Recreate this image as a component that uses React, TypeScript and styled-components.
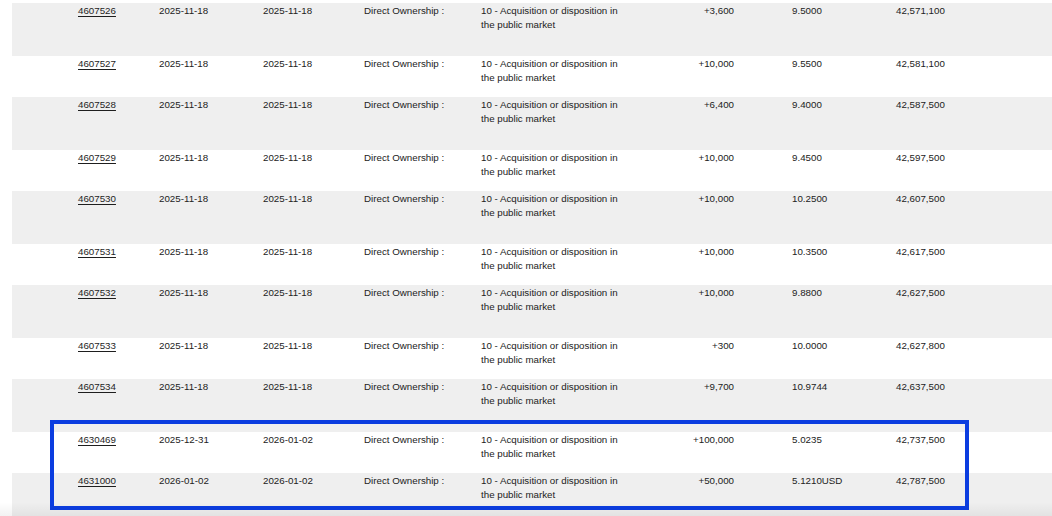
import React from "react";
import styled, { createGlobalStyle } from "styled-components";

interface Filing {
  id: string;
  tradeDate: string;
  filedDate: string;
  ownership: string;
  nature: string;
  change: string;
  price: string;
  balance: string;
}

const nature = "10 - Acquisition or disposition in the public market";

const rows: Filing[] = [
  ["4607526", "2025-11-18", "2025-11-18", "+3,600", "9.5000", "42,571,100"],
  ["4607527", "2025-11-18", "2025-11-18", "+10,000", "9.5500", "42,581,100"],
  ["4607528", "2025-11-18", "2025-11-18", "+6,400", "9.4000", "42,587,500"],
  ["4607529", "2025-11-18", "2025-11-18", "+10,000", "9.4500", "42,597,500"],
  ["4607530", "2025-11-18", "2025-11-18", "+10,000", "10.2500", "42,607,500"],
  ["4607531", "2025-11-18", "2025-11-18", "+10,000", "10.3500", "42,617,500"],
  ["4607532", "2025-11-18", "2025-11-18", "+10,000", "9.8800", "42,627,500"],
  ["4607533", "2025-11-18", "2025-11-18", "+300", "10.0000", "42,627,800"],
  ["4607534", "2025-11-18", "2025-11-18", "+9,700", "10.9744", "42,637,500"],
  ["4630469", "2025-12-31", "2026-01-02", "+100,000", "5.0235", "42,737,500"],
  ["4631000", "2026-01-02", "2026-01-02", "+50,000", "5.1210USD", "42,787,500"],
].map(([id, tradeDate, filedDate, change, price, balance]) => ({
  id,
  tradeDate,
  filedDate,
  ownership: "Direct Ownership :",
  nature,
  change,
  price,
  balance,
}));

const GlobalStyle = createGlobalStyle`
  html, body {
    margin: 0;
    padding: 0;
    background: #ffffff;
    overflow: hidden;
  }
  body {
    font-family: "Liberation Sans", Arial, sans-serif;
    color: #222;
  }
`;

const Page = styled.div`
  position: relative;
  width: 1052px;
  height: 516px;
  overflow: hidden;
  padding: 3px 0 0 12px;
  box-sizing: border-box;
`;

const Table = styled.div`
  display: flex;
  flex-direction: column;
`;

const Row = styled.div<{ $shaded: boolean }>`
  display: grid;
  grid-template-columns: 81px 104px 101px 117px 145px 108px 162px 1fr;
  align-items: start;
  padding: 1px 0 0 66px;
  height: ${({ $shaded }) => ($shaded ? "53px" : "41px")};
  box-sizing: border-box;
  background: ${({ $shaded }) => ($shaded ? "#efefef" : "#ffffff")};
  font-size: 9.75px;
  line-height: 14px;
`;

const Cell = styled.div<{ $align?: "left" | "right"; $indent?: number }>`
  text-align: ${({ $align }) => $align ?? "left"};
  padding-left: ${({ $indent }) => $indent ?? 0}px;
  white-space: ${({ $align }) => ($align === "right" ? "nowrap" : "normal")};
`;

const FilingLink = styled.a`
  color: #1e1e1e;
  text-decoration: underline;
  text-underline-offset: 2px;
  text-decoration-thickness: 1px;
`;

// blue annotation box drawn over the two newest filings
const HighlightGroup = styled.div`
  position: relative;

  &::after {
    content: "";
    position: absolute;
    top: -12px;
    left: 38px;
    width: 919px;
    bottom: 16px;
    border: 4.5px solid #0b3de0;
    box-sizing: border-box;
    pointer-events: none;
  }
`;

const BottomShade = styled.div`
  position: absolute;
  left: 0;
  right: 0;
  bottom: 0;
  height: 14px;
  background: linear-gradient(to bottom, rgba(0, 0, 0, 0), rgba(0, 0, 0, 0.05));
  pointer-events: none;
`;

const FilingRow = ({ row, shaded }: { row: Filing; shaded: boolean }) => (
  <Row $shaded={shaded}>
    <Cell>
      <FilingLink>{row.id}</FilingLink>
    </Cell>
    <Cell>{row.tradeDate}</Cell>
    <Cell>{row.filedDate}</Cell>
    <Cell>{row.ownership}</Cell>
    <Cell>{row.nature}</Cell>
    <Cell $align="right">{row.change}</Cell>
    <Cell $indent={58}>{row.price}</Cell>
    <Cell>{row.balance}</Cell>
  </Row>
);

const App = () => {
  const plain = rows.slice(0, 9);
  const highlighted = rows.slice(9);

  return (
    <>
      <GlobalStyle />
      <Page>
        <Table>
          {plain.map((row, index) => (
            <FilingRow key={row.id} row={row} shaded={index % 2 === 0} />
          ))}
          <HighlightGroup>
            {highlighted.map((row, index) => (
              <FilingRow key={row.id} row={row} shaded={(index + 9) % 2 === 0} />
            ))}
          </HighlightGroup>
        </Table>
        <BottomShade />
      </Page>
    </>
  );
};

export default App;
